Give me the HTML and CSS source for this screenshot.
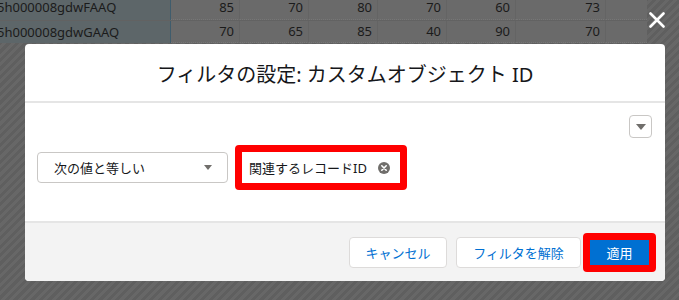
FILE: index.html
```html
<!DOCTYPE html>
<html lang="ja">
  <head>
    <meta charset="UTF-8" />
    <meta name="viewport" content="width=device-width, initial-scale=1.0" />
    <title>フィルタの設定</title>
    <link rel="stylesheet" href="styles.css">
  </head>

  <body>
    <div class="backdrop">
      <div class="grid">
        <div class="row first">
          <div class="cell id">5h000008gdwFAAQ</div>
          <div class="cell num">85</div>
          <div class="cell num">70</div>
          <div class="cell num">80</div>
          <div class="cell num">70</div>
          <div class="cell num">60</div>
          <div class="cell num last">73</div>
          <div class="cell pad"></div>
        </div>
        <div class="row second">
          <div class="cell id">5h000008gdwGAAQ</div>
          <div class="cell num">70</div>
          <div class="cell num">65</div>
          <div class="cell num">85</div>
          <div class="cell num">40</div>
          <div class="cell num">90</div>
          <div class="cell num last">70</div>
          <div class="cell pad"></div>
        </div>
      </div>

      <button class="close" title="閉じる">
        <svg width="16" height="16" viewBox="0 0 16 16">
          <path d="M1.5 1.5 L14.5 14.5 M14.5 1.5 L1.5 14.5" stroke="#fff" stroke-width="2.6" stroke-linecap="round" />
        </svg>
      </button>

      <div class="modal">
        <div class="modal-head">
          <h2>フィルタの設定: カスタムオブジェクト ID</h2>
        </div>

        <div class="modal-body">
          <div class="tools">
            <button class="menu-btn"><span class="tri"></span></button>
          </div>
          <div class="filter-row">
            <div class="select">
              <span>次の値と等しい</span>
              <span class="tri"></span>
            </div>
            <div class="mark">
              <div class="pill">
                <span>関連するレコードID</span>
                <span class="clear">
                  <svg width="12" height="12" viewBox="0 0 12 12">
                    <circle cx="6" cy="6" r="6" fill="#706e6b" />
                    <path d="M3.8 3.8 L8.2 8.2 M8.2 3.8 L3.8 8.2" stroke="#fff" stroke-width="1.6" stroke-linecap="round" />
                  </svg>
                </span>
              </div>
            </div>
          </div>
        </div>

        <div class="modal-foot">
          <button class="btn cancel">キャンセル</button>
          <button class="btn reset">フィルタを解除</button>
          <div class="mark mark-btn">
            <button class="btn brand">適用</button>
          </div>
        </div>
      </div>
    </div>
  </body>
</html>
```

FILE: styles.css
```css
* {
  box-sizing: border-box;
}

body {
  margin: 0;
  font-family: "Noto Sans", "Noto Sans CJK JP", sans-serif;
  background-color: #626262;
}

.backdrop {
  position: relative;
  width: 679px;
  height: 300px;
  overflow: hidden;
  background: repeating-linear-gradient(
    -45deg,
    #5f5f5f 0px,
    #5f5f5f 3px,
    #676767 3px,
    #676767 6px
  );
}

.grid {
  height: 43px;
  width: 647px;
  overflow: hidden;
  background-color: #6a6a6a;
}

.row {
  display: flex;
  border-bottom: 1px solid #626262;
}

.first {
  height: 21px;
}

.first .cell {
  padding-bottom: 5px;
}

.second {
  height: 22px;
  border-bottom: none;
}

.cell {
  display: flex;
  align-items: center;
  font-size: 13px;
  line-height: 15px;
  color: #1b1b1b;
  height: 100%;
}

.id {
  width: 174px;
  margin-left: -3px;
  background-color: #5d6669;
  border-right: 1px solid #3f5c6c;
}

.num {
  width: 69px;
  justify-content: flex-end;
  padding-right: 5px;
  border-right: 1px solid #646464;
  border-bottom: 1px dotted #767676;
}

.last {
  width: 90px;
}

.pad {
  flex: 1;
  border-bottom: 1px dotted #767676;
}

.close {
  position: absolute;
  left: 649px;
  top: 12px;
  width: 16px;
  height: 16px;
  padding: 0;
  border: none;
  background: none;
  display: flex;
}

.modal {
  margin: 1px 14px 0 25px;
  height: 237px;
  background-color: white;
  border-radius: 4px;
  overflow: hidden;
  display: flex;
  flex-direction: column;
}

.modal-head {
  height: 59px;
  border-bottom: 2px solid #e5e5e5;
  display: flex;
  align-items: center;
  justify-content: center;
  padding-top: 1px;
}

.modal-head h2 {
  margin: 0;
  font-size: 20px;
  font-weight: 400;
  color: #16171a;
}

.modal-body {
  height: 120px;
  padding: 12px 13px 0 12px;
  border-bottom: 2px solid #e5e5e5;
}

.tools {
  display: flex;
  justify-content: flex-end;
}

.menu-btn {
  width: 23px;
  height: 23px;
  padding: 0;
  border: 1px solid #c9c7c5;
  border-radius: 4px;
  background-color: white;
  display: flex;
  align-items: center;
  justify-content: center;
}

.tri {
  width: 0;
  height: 0;
  border-left: 5px solid transparent;
  border-right: 5px solid transparent;
  border-top: 6px solid #706e6b;
}

.filter-row {
  display: flex;
  align-items: center;
  gap: 7px;
  margin-top: 7px;
}

.select {
  width: 191px;
  height: 31px;
  border: 1px solid #c9c7c5;
  border-radius: 4px;
  display: flex;
  align-items: center;
  justify-content: space-between;
  padding: 0 15px 0 16px;
  font-size: 13px;
  color: #16171a;
}

.select .tri {
  border-left-width: 4px;
  border-right-width: 4px;
  border-top-width: 5px;
}

.mark {
  border: 7px solid #ff0000;
  border-radius: 4px;
}

.pill {
  width: 158px;
  height: 31px;
  display: flex;
  align-items: center;
  justify-content: space-between;
  padding: 0 10px 0 7px;
  font-size: 13px;
  color: #16171a;
  background-color: white;
}

.clear {
  display: flex;
}

.modal-foot {
  flex: 1;
  background-color: #f3f3f3;
  display: flex;
  align-items: center;
  justify-content: flex-end;
  gap: 9px;
  padding-right: 9px;
}

.btn {
  height: 31px;
  padding: 0;
  border: 1px solid #dddbda;
  border-radius: 4px;
  background-color: white;
  color: #0070d2;
  font-family: "Noto Sans", "Noto Sans CJK JP", sans-serif;
  font-size: 13px;
  white-space: nowrap;
}

.cancel {
  width: 98px;
}

.reset {
  width: 125px;
}

.mark-btn {
  margin-left: -7px;
  display: flex;
}

.brand {
  width: 59px;
  height: 25px;
  border: none;
  border-radius: 0;
  background-color: #0070d2;
  color: white;
}
```
